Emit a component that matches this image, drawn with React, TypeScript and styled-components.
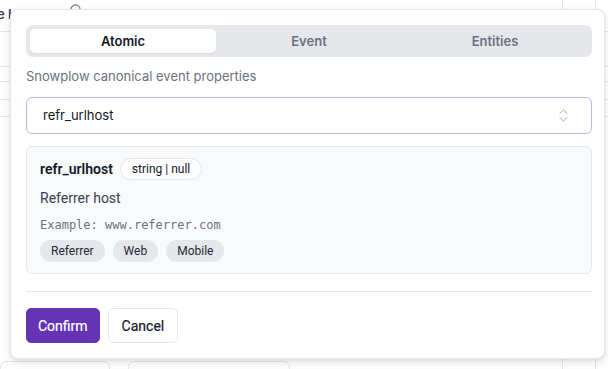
import { useState } from 'react';
import styled, { createGlobalStyle } from 'styled-components';
import { ChevronsUpDown } from 'lucide-react';

const GlobalStyle = createGlobalStyle`
  html, body {
    margin: 0;
    padding: 0;
    background: #ffffff;
    font-family: Inter, "Noto Sans", sans-serif;
    color: #111827;
  }
  * { box-sizing: border-box; }
`;

const Page = styled.div`
  position: relative;
  width: 608px;
  height: 369px;
  overflow: hidden;
  background: #ffffff;
`;

// faint table that sits behind the popover
const Backdrop = styled.div`
  position: absolute;
  inset: 0;
  display: flex;
  flex-direction: column;
`;

const BackHead = styled.div`
  height: 32px;
  border-bottom: 1px solid #e5e7eb;
  display: flex;
  align-items: center;
  gap: 58px;
  padding-bottom: 3px;
  font-family: Inter, sans-serif;
  font-size: 13px;
  font-weight: 600;
  color: #374151;
  span {
    margin-left: -3px;
  }
  svg {
    color: #6b7280;
    margin-top: -10px;
  }
`;

const BackRow = styled.div<{ $h: number }>`
  height: ${(p) => p.$h}px;
  border-bottom: 1px solid #e5e7eb;
`;

const BackInputs = styled.div`
  position: absolute;
  left: 0;
  bottom: -14px;
  display: flex;
  gap: 18px;
`;

const BackInput = styled.div<{ $w: number }>`
  width: ${(p) => p.$w}px;
  height: 22px;
  border: 1px solid #e5e7eb;
  border-radius: 6px;
`;

const BackCol = styled.div<{ $x: number }>`
  position: absolute;
  top: 0;
  bottom: 0;
  left: ${(p) => p.$x}px;
  width: 1px;
  background: #e5e7eb;
`;

const Popover = styled.div`
  position: absolute;
  left: 10px;
  top: 9px;
  width: 595px;
  height: 350px;
  background: #ffffff;
  border: 1px solid #e5e7eb;
  border-radius: 8px;
  box-shadow: 0 4px 10px rgba(0, 0, 0, 0.1), 0 1px 3px rgba(0, 0, 0, 0.08);
  padding: 15px 12px 15px 15px;
  display: flex;
  flex-direction: column;
`;

const Tabs = styled.div`
  display: grid;
  grid-template-columns: repeat(3, 1fr);
  padding: 4px;
  height: 32px;
  background: #e5e7eb;
  border-radius: 7px;
`;

const Tab = styled.button<{ $active?: boolean }>`
  border: none;
  border-radius: 5px;
  background: ${(p) => (p.$active ? '#ffffff' : 'transparent')};
  box-shadow: ${(p) => (p.$active ? '0 1px 2px rgba(0,0,0,0.06)' : 'none')};
  color: ${(p) => (p.$active ? '#111827' : '#6b7280')};
  font-family: Inter, sans-serif;
  font-size: 13px;
  font-weight: 600;
  padding: 0;
  cursor: pointer;
`;

const Hint = styled.div`
  margin-top: 10px;
  font-size: 13px;
  color: #6b7280;
  line-height: 18px;
`;

const Select = styled.div`
  margin-top: 12px;
  height: 37px;
  border: 1px solid #c4b5e8;
  border-radius: 6px;
  display: flex;
  align-items: center;
  justify-content: space-between;
  padding: 0 19px 0 16px;
  font-size: 13px;
  color: #111827;
  svg {
    color: #9ca3af;
  }
`;

const Card = styled.div`
  margin-top: 12px;
  height: 129px;
  background: #f9fafb;
  border: 1px solid #e5e7eb;
  border-radius: 6px;
  padding: 11px 13px;
  display: flex;
  flex-direction: column;
  font-family: Roboto, "Noto Sans", sans-serif;
`;

const CardHead = styled.div`
  display: flex;
  align-items: center;
  gap: 7px;
`;

const Name = styled.span`
  font-size: 14px;
  font-weight: 600;
  color: #111827;
`;

const TypeBadge = styled.span`
  height: 22px;
  padding: 0 11px;
  display: inline-flex;
  align-items: center;
  border: 1px solid #e5e7eb;
  border-radius: 999px;
  background: #ffffff;
  font-size: 12px;
  color: #111827;
`;

const Desc = styled.div`
  margin-top: 9px;
  font-size: 14px;
  color: #374151;
  line-height: 18px;
`;

const Example = styled.div`
  margin-top: 11px;
  font-family: "DejaVu Sans Mono", "Liberation Mono", monospace;
  font-size: 12px;
  color: #6b7280;
  line-height: 15px;
`;

const Tags = styled.div`
  margin-top: 7px;
  display: flex;
  gap: 8px;
`;

const Tag = styled.span`
  height: 22px;
  padding: 0 11px;
  display: inline-flex;
  align-items: center;
  border-radius: 999px;
  background: #e5e7eb;
  font-size: 12px;
  color: #1f2937;
`;

const Divider = styled.div`
  margin-top: 17px;
  height: 1px;
  background: #e5e7eb;
`;

const Actions = styled.div`
  margin-top: 16px;
  display: flex;
  gap: 8px;
`;

const Button = styled.button<{ $primary?: boolean }>`
  height: 35px;
  padding: 0 ${(p) => (p.$primary ? 11 : 13)}px;
  border-radius: 5px;
  border: 1px solid ${(p) => (p.$primary ? '#6434b4' : '#e5e7eb')};
  background: ${(p) => (p.$primary ? '#6434b4' : '#ffffff')};
  color: ${(p) => (p.$primary ? '#ffffff' : '#111827')};
  font-family: Roboto, "Noto Sans", sans-serif;
  font-size: 14px;
  font-weight: 400;
  -webkit-text-stroke: 0.2px currentColor;
  cursor: pointer;
`;

const tabNames = ['Atomic', 'Event', 'Entities'];
const rowHeights = [35, 15, 18, 17];

export default function App() {
  const [tab, setTab] = useState('Atomic');

  return (
    <Page>
      <GlobalStyle />
      <Backdrop>
        <BackHead>
          <span>e I</span>
          <svg width="11" height="11" viewBox="0 0 12 12">
            <circle cx="6" cy="6" r="5" fill="none" stroke="currentColor" strokeWidth="1.2" />
          </svg>
        </BackHead>
        {rowHeights.map((h, i) => (
          <BackRow key={i} $h={h} />
        ))}
      </Backdrop>
      <BackCol $x={562} />
      <BackCol $x={595} />
      <BackInputs>
        <BackInput $w={110} />
        <BackInput $w={162} />
      </BackInputs>

      <Popover>
        <Tabs>
          {tabNames.map((t) => (
            <Tab key={t} $active={t === tab} onClick={() => setTab(t)}>
              {t}
            </Tab>
          ))}
        </Tabs>
        <Hint>Snowplow canonical event properties</Hint>
        <Select>
          <span>refr_urlhost</span>
          <ChevronsUpDown size={17} strokeWidth={1.4} />
        </Select>
        <Card>
          <CardHead>
            <Name>refr_urlhost</Name>
            <TypeBadge>string | null</TypeBadge>
          </CardHead>
          <Desc>Referrer host</Desc>
          <Example>Example: www.referrer.com</Example>
          <Tags>
            <Tag>Referrer</Tag>
            <Tag>Web</Tag>
            <Tag>Mobile</Tag>
          </Tags>
        </Card>
        <Divider />
        <Actions>
          <Button $primary>Confirm</Button>
          <Button>Cancel</Button>
        </Actions>
      </Popover>
    </Page>
  );
}
